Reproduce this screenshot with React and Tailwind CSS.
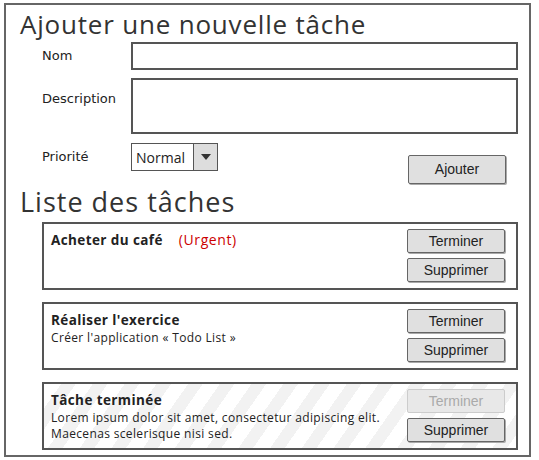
import React from 'react';

const btn = 'w-[98px] h-[24px] border border-[#666] rounded-[2px] bg-[#e0e0e0] text-[14px] text-[#222] font-["Liberation_Sans",sans-serif] flex items-center justify-center shadow-[1px_1px_0_#aaa]';
const btnOff = 'w-[98px] h-[24px] border border-[#ccc] rounded-[2px] bg-[#e8e8e8] text-[14px] text-[#aaa] font-["Liberation_Sans",sans-serif] flex items-center justify-center';

const TaskCard = ({ title, tag, text, done }) => (
    <div className={`h-[68px] border-2 border-[#555] flex justify-between pl-[7px] pr-[11px] ${done ? 'bg-[repeating-linear-gradient(125deg,#ffffff_0px,#ffffff_14px,#f2f2f2_14px,#f2f2f2_26px)]' : 'bg-white'}`}>
        <div className="pt-[6px] font-['Open_Sans',sans-serif] text-[#222]">
            <div className="text-[13.5px] font-bold leading-[20px] tracking-[0.4px]">
                {title}
                {tag && <span className="ml-[16px] text-[14px] font-normal tracking-[0.6px] text-[#cc0000]">{tag}</span>}
            </div>
            {text && <div className="text-[12px] leading-[16px] tracking-[0.35px]">{text}</div>}
        </div>
        <div className="pt-[5px] flex flex-col gap-[5px]">
            <div className={done ? btnOff : btn}>Terminer</div>
            <div className={btn}>Supprimer</div>
        </div>
    </div>
);

export default function App() {
    return (
        <div className="w-[539px] h-[460px] bg-white pl-[4px] pt-[3px]">
            <div className="w-[527px] h-[454px] border-2 border-[#666] pl-[14px] pr-[11px] pt-[2px] font-['Open_Sans',sans-serif] text-[#333]">
                <h1 className="text-[26px] leading-[34px] tracking-[0.8px]">Ajouter une nouvelle tâche</h1>

                <div className="grid grid-cols-[89px_1fr] items-center gap-y-[8px] pl-[22px] mt-[1px] font-['DejaVu_Sans',sans-serif] text-[13px] text-[#222]">
                    <div className="self-start pt-[4px]">Nom</div>
                    <div className="h-[28px] border-2 border-[#555]" />
                    <div className="self-start pt-[11px]">Description</div>
                    <div className="h-[56px] border-2 border-[#555]" />
                </div>

                <div className="flex pl-[22px] mt-[9px] h-[42px]">
                    <div className="w-[89px] pt-[4px] font-['DejaVu_Sans',sans-serif] text-[13px] text-[#222]">Priorité</div>
                    <div className="w-[87px] h-[28px] border border-[#555] flex font-['Open_Sans',sans-serif] text-[14px] text-[#222]">
                        <div className="flex-1 pl-[4px] flex items-center">Normal</div>
                        <div className="w-[24px] border-l border-[#555] bg-[#ddd] flex items-center justify-center">
                            <svg width="10" height="6" viewBox="0 0 10 6"><path d="M0 0 L10 0 L5 6 Z" fill="#333" /></svg>
                        </div>
                    </div>
                    <div className="ml-auto mr-[12px] mt-[12px] w-[98px] h-[29px] border border-[#666] rounded-[2px] bg-[#e0e0e0] text-[14px] text-[#222] font-['Liberation_Sans',sans-serif] flex items-center justify-center shadow-[1px_1px_0_#aaa]">Ajouter</div>
                </div>

                <h2 className="text-[27px] leading-[34px] tracking-[1px]">Liste des tâches</h2>

                <div className="ml-[22px] mt-[3px] flex flex-col gap-[12px]">
                    <TaskCard title="Acheter du café" tag="(Urgent)" />
                    <TaskCard title="Réaliser l'exercice" text="Créer l'application « Todo List »" />
                    <TaskCard
                        title="Tâche terminée"
                        done
                        text={<>Lorem ipsum dolor sit amet, consectetur adipiscing elit.<br />Maecenas scelerisque nisi sed.</>}
                    />
                </div>
            </div>
        </div>
    );
}
